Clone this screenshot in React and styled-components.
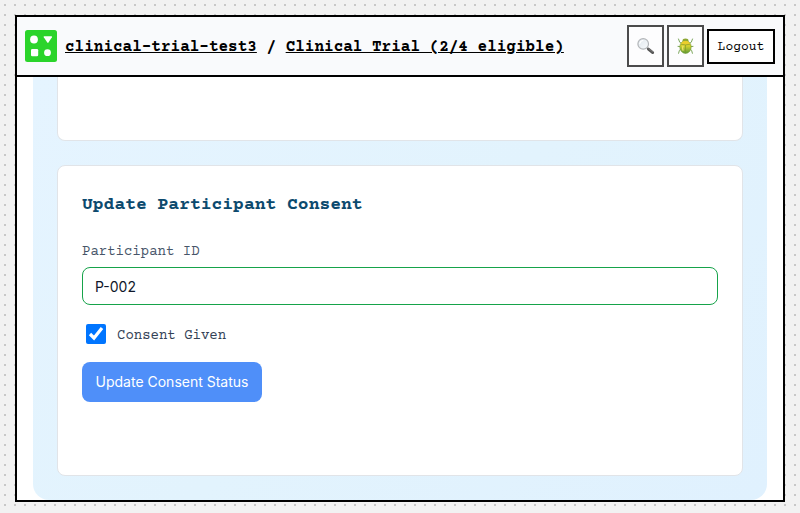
import React, { useState } from "react";
import styled, { createGlobalStyle } from "styled-components";

const mono = '"Courier Prime", "Courier New", "Liberation Mono", monospace';
const sans = 'Inter, "Liberation Sans", sans-serif';

const GlobalStyle = createGlobalStyle`
  *, *::before, *::after { box-sizing: border-box; }
  body {
    margin: 0;
    font-family: ${mono};
    background: #f2f2f2 radial-gradient(#c8c8c8 1px, transparent 1px) 0 0 / 10px 10px;
  }
`;

const Page = styled.div`
  display: flex;
  height: 100vh;
  padding: 15px 15px 11px;
`;

const Frame = styled.div`
  display: flex;
  flex-direction: column;
  flex: 1;
  min-width: 0;
  overflow: hidden;
  border: 2px solid #000;
  background: #fff;
`;

const Header = styled.header`
  display: flex;
  align-items: center;
  gap: 8px;
  flex-shrink: 0;
  padding: 8px;
  border-bottom: 2px solid #000;
  background: #f9fafc;
`;

const LogoLink = styled.a`
  display: flex;
  svg { width: 32px; height: 32px; }
`;

const Crumbs = styled.nav`
  flex: 1;
  min-width: 0;
  padding-top: 2px;
  font-size: 16px;
  line-height: 24px;
  font-weight: 700;
  white-space: nowrap;
  color: #000;
`;

const CrumbLink = styled.a`
  color: inherit;
  text-decoration: underline;
`;

const Actions = styled.div`
  display: flex;
  align-items: center;
  gap: 3px;
`;

const IconButton = styled.button`
  display: flex;
  align-items: center;
  justify-content: center;
  padding: 10px 7px;
  border: 2px solid #4b4b4c;
  background: #fdfdfe;
  cursor: pointer;
  svg { width: 19px; height: 18px; }
`;

const LogoutButton = styled.button`
  padding: 9px 8px 7px;
  border: 2px solid #000;
  background: #fff;
  color: #000;
  font-family: ${mono};
  font-size: 13px;
  line-height: 15px;
  min-width: 68px;
  cursor: pointer;
`;

const Content = styled.main`
  flex: 1;
  min-height: 0;
  overflow: hidden;
  padding: 0 16px;
`;

const Panel = styled.div`
  display: flex;
  flex-direction: column;
  gap: 24px;
  padding: 0 24px 24px;
  border-radius: 0 0 16px 16px;
  background: linear-gradient(135deg, #e5f4ff, #e2f3fd 50%, #e0f1fe);
`;

const Card = styled.section`
  padding: 24px 24px 73px;
  border: 1px solid #e1e4e8;
  border-radius: 8px;
  background: #fff;
`;

const CardEnd = styled.section`
  min-height: 64px;
  border: 1px solid #e1e4e8;
  border-top: 0;
  border-radius: 0 0 8px 8px;
  background: #fff;
`;

const Title = styled.h2`
  margin: 0 0 22px;
  font-size: 18px;
  line-height: 30px;
  font-weight: 700;
  color: #0c4a6e;
`;

const Form = styled.form`
  display: flex;
  flex-direction: column;
  align-items: flex-start;
`;

const Label = styled.label`
  margin-bottom: 5px;
  font-size: 14px;
  line-height: 20px;
  color: #475569;
`;

const TextInput = styled.input`
  width: 100%;
  padding: 8px 12px;
  border: 1px solid #16a34a;
  border-radius: 8px;
  outline: none;
  background: #fff;
  color: #0f172a;
  font-family: ${sans};
  font-size: 14px;
  line-height: 20px;
  height: 38px;
`;

const CheckLabel = styled.label`
  display: flex;
  align-items: center;
  gap: 11px;
  margin: 17px 0 16px 4px;
  font-size: 14px;
  line-height: 20px;
  color: #334155;
`;

const CheckText = styled.span`
  padding-top: 4px;
`;

const Checkbox = styled.input`
  width: 20px;
  height: 20px;
  margin: 0;
  accent-color: #0075ff;
`;

const SubmitButton = styled.button`
  min-width: 180px;
  padding: 10px 13px;
  border: 0;
  border-radius: 8px;
  background: #4f8ff9;
  color: #fff;
  font-family: ${sans};
  font-size: 14px;
  line-height: 20px;
  font-weight: 400;
  white-space: nowrap;
  cursor: pointer;
`;

function Logo() {
  return (
    <svg viewBox="0 0 32 32" aria-hidden="true">
      <rect width="32" height="32" rx="2.5" fill="#2bd42b" />
      <circle cx="9" cy="9.5" r="3.9" fill="#fff" />
      <path d="M19.2 6.3h7.2q1 0 .5 1l-3.4 5.3q-.6.9-1.2 0l-3.5-5.3q-.5-1 .4-1z" fill="#fff" />
      <rect x="6" y="19" width="7.2" height="7.2" rx="1.3" fill="#fff" />
      <circle cx="22.5" cy="22.7" r="3.4" fill="#fff" />
    </svg>
  );
}

function Magnifier() {
  return (
    <svg viewBox="0 0 19 18" aria-hidden="true">
      <defs>
        <linearGradient id="lens" x1="0" y1="0" x2="1" y2="1">
          <stop offset="0" stopColor="#dfe6ec" />
          <stop offset="1" stopColor="#f8fbfd" />
        </linearGradient>
      </defs>
      <path d="M11 10.8l2 1.7" stroke="#777" strokeWidth="1.5" />
      <path d="M12.4 12.1l4.3 3.5" stroke="#555" strokeWidth="2.8" strokeLinecap="round" />
      <path d="M12.8 11.8l3.8 3" stroke="#8a8a8a" strokeWidth=".7" strokeLinecap="round" />
      <circle cx="7.2" cy="6.9" r="5.3" fill="url(#lens)" stroke="#b3b6b9" strokeWidth="1.2" />
      <path d="M3.8 6.5q.5-2.6 3-3" stroke="#fff" strokeWidth="1.2" fill="none" strokeLinecap="round" />
    </svg>
  );
}

function Beetle() {
  return (
    <svg viewBox="0 0 19 18" aria-hidden="true">
      <defs>
        <linearGradient id="shell" x1="0" y1="0" x2="0" y2="1">
          <stop offset="0" stopColor="#f0d42c" />
          <stop offset=".45" stopColor="#cfcf2e" />
          <stop offset="1" stopColor="#5c9b36" />
        </linearGradient>
      </defs>
      <g fill="none" stroke="#7ca65c" strokeWidth="1" strokeLinecap="round" strokeLinejoin="round">
        <path d="M5.8 6.5L3.7 5.2 2.5 2M13.2 6.5l2.1-1.3L16.5 2" />
        <path d="M5 9.6L2 9.4M14 9.6l3-.2" />
        <path d="M5.2 12.2l-1.8 1.2-.8 2.9M13.8 12.2l1.8 1.2.8 2.9" />
      </g>
      <ellipse cx="9.5" cy="3.8" rx="3" ry="2.4" fill="#8da735" />
      <ellipse cx="9.5" cy="10" rx="5.7" ry="6.4" fill="url(#shell)" stroke="#739b35" strokeWidth=".6" />
      <path d="M5 7Q6 4 9.5 4T14 7Q9.5 8.4 5 7z" fill="#ecce2c" />
      <path d="M4.9 7.2q4.6 1.4 9.2 0M9.5 8v8.2" fill="none" stroke="#7a922b" strokeWidth=".6" />
      <path d="M7 9.2q-.8 2 0 4" fill="none" stroke="#f5e873" strokeWidth="1.2" strokeLinecap="round" />
    </svg>
  );
}

export default function App() {
  const [participant, setParticipant] = useState("P-002");
  const [consent, setConsent] = useState(true);

  return (
    <Page>
      <GlobalStyle />
      <Frame>
        <Header>
          <LogoLink href="#home" aria-label="Home">
            <Logo />
          </LogoLink>
          <Crumbs>
            <CrumbLink href="#space">clinical-trial-test3</CrumbLink>
            {" / "}
            <CrumbLink href="#trial">Clinical Trial (2/4 eligible)</CrumbLink>
          </Crumbs>
          <Actions>
            <IconButton type="button" aria-label="Search">
              <Magnifier />
            </IconButton>
            <IconButton type="button" aria-label="Debug">
              <Beetle />
            </IconButton>
            <LogoutButton type="button">Logout</LogoutButton>
          </Actions>
        </Header>
        <Content>
          <Panel>
            <CardEnd />
            <Card>
              <Title>Update Participant Consent</Title>
              <Form onSubmit={(event) => event.preventDefault()}>
                <Label htmlFor="participant">Participant ID</Label>
                <TextInput
                  id="participant"
                  type="text"
                  value={participant}
                  onChange={(event) => setParticipant(event.target.value)}
                />
                <CheckLabel htmlFor="consent">
                  <Checkbox
                    id="consent"
                    type="checkbox"
                    checked={consent}
                    onChange={(event) => setConsent(event.target.checked)}
                  />
                  <CheckText>Consent Given</CheckText>
                </CheckLabel>
                <SubmitButton type="submit">Update Consent Status</SubmitButton>
              </Form>
            </Card>
          </Panel>
        </Content>
      </Frame>
    </Page>
  );
}
